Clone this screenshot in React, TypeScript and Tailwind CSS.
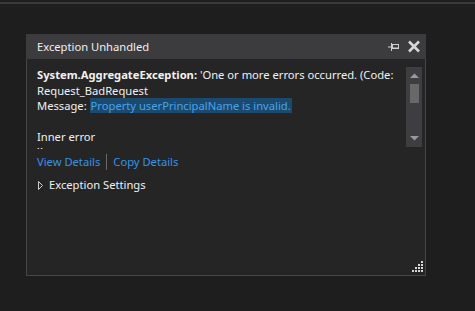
import React from "react";

export default function App() {
  const font = { fontFamily: '"Noto Sans", "Open Sans", sans-serif' };
  return (
    <div className="w-[475px] h-[311px] bg-[#1e1e1e] overflow-hidden" style={font}>
      <div className="h-[2px]" />
      <div className="h-[2px] bg-[#3a3a3a]" />
      <div className="pt-[30px] pl-[26px]">
        <div className="w-[400px] h-[242px] flex flex-col">
          <div className="h-[25px] bg-[#3c3c3e] flex items-center pl-[11px] pr-[5px] text-[11.2px] text-[#f1f1f1]">
            <span className="flex-1 pt-[2px]">Exception Unhandled</span>
            <svg width="12" height="8" viewBox="0 0 12 8" className="mr-[7px]">
              <rect x="0" y="3.5" width="3" height="1" fill="#d0d0d0" />
              <rect x="3" y="0" width="1" height="8" fill="#d0d0d0" />
              <rect x="4.5" y="1.5" width="6" height="4" fill="none" stroke="#d0d0d0" strokeWidth="1" />
              <rect x="4" y="4.5" width="7" height="1.5" fill="#d0d0d0" />
            </svg>
            <svg width="14" height="13" viewBox="0 0 14 13">
              <path d="M2 1.5 L12 11.5 M12 1.5 L2 11.5" stroke="#d6d6d6" strokeWidth="2.6" />
            </svg>
          </div>
          <div className="flex-1 bg-[#252526] border border-t-0 border-[#46464a] flex flex-col relative">
            <div className="flex pt-[8px] pr-[2px]">
              <div className="flex-1 h-[82px] overflow-hidden pl-[10px] text-[11.2px] leading-[15.5px] text-[#f1f1f1]">
                <div className="whitespace-nowrap">
                  <span className="font-bold">System.AggregateException:</span> 'One or more errors occurred. (Code:
                </div>
                <div>Request_BadRequest</div>
                <div>
                  Message: <span className="bg-[#1b4a6e] text-[#4aa3ea] px-[1px]">Property userPrincipalName is invalid.</span>
                </div>
                <div className="h-[15.5px]" />
                <div>Inner error</div>
                <div className="h-[5px] overflow-hidden">``</div>
              </div>
              <div className="w-[16px] h-[80px] bg-[#3e3e42] flex flex-col items-center mr-[1px]">
                <svg width="9" height="6" viewBox="0 0 9 6" className="mt-[6px]">
                  <path d="M0 5 L4.5 0.5 L9 5 Z" fill="#999999" />
                </svg>
                <div className="w-[9px] h-[19px] bg-[#686868] mt-[5px]" />
                <div className="flex-1" />
                <svg width="9" height="6" viewBox="0 0 9 6" className="mb-[6px]">
                  <path d="M0 1 L4.5 5.5 L9 1 Z" fill="#999999" />
                </svg>
              </div>
            </div>
            <div className="flex items-center pl-[10px] mt-[5px] text-[11.2px] leading-[16px] text-[#3794e6]">
              <span>View Details</span>
              <span className="w-[1px] h-[16px] bg-[#6a6a6a] mx-[6px]" />
              <span>Copy Details</span>
            </div>
            <div className="flex items-center pl-[11px] mt-[7px] text-[11.2px] leading-[16px] text-[#f1f1f1]">
              <svg width="5" height="9" viewBox="0 0 5 9" className="mr-[6px]">
                <path d="M0.5 0.5 L4.5 4.5 L0.5 8.5 Z" fill="none" stroke="#d0d0d0" strokeWidth="1" />
              </svg>
              <span>Exception Settings</span>
            </div>
            <svg width="12" height="12" viewBox="0 0 12 12" className="absolute right-[2px] bottom-[2px]">
              {[
                [10, 0],
                [7, 3], [10, 3],
                [4, 6], [7, 6], [10, 6],
                [1, 9], [4, 9], [7, 9], [10, 9],
              ].map(([x, y], i) => (
                <rect key={i} x={x} y={y} width="2" height="2" fill="#d8d8d8" />
              ))}
            </svg>
          </div>
        </div>
      </div>
    </div>
  );
}
